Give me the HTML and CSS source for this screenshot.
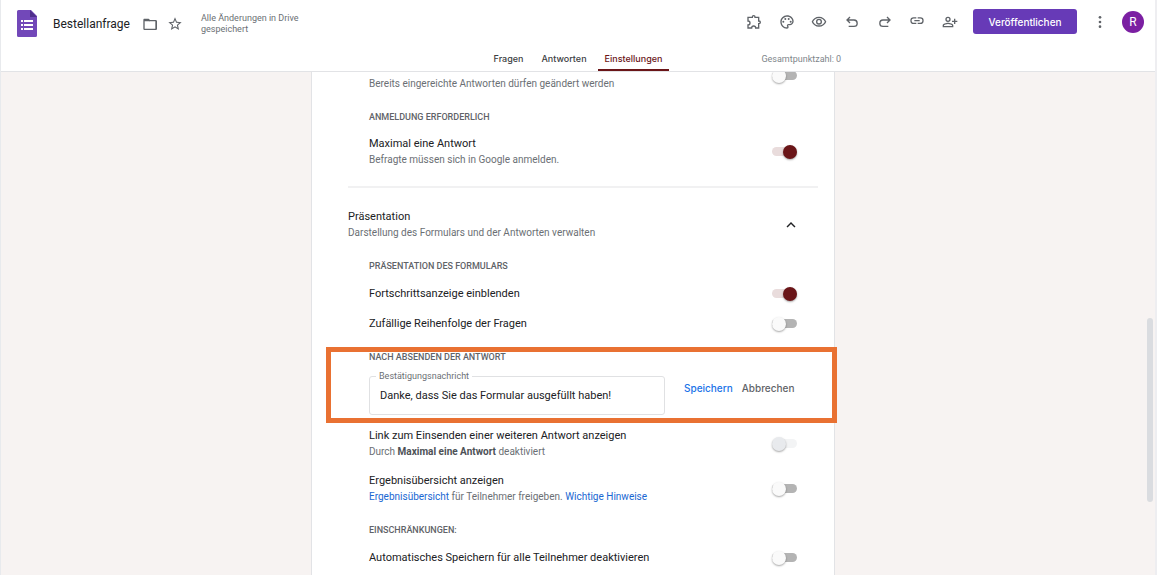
FILE: index.html
```html
<!DOCTYPE html>
<html lang="de">
  <head>
    <meta charset="utf-8">
    <title>Bestellanfrage</title>
    <link rel="stylesheet" href="styles.css">
  </head>
  <body>
    <header class="header">
      <div class="topbar">
        <div class="doc">
          <svg class="logo" viewBox="0 0 20 27">
            <path fill="#7248b9" d="M1.500 0H14l6 6v19.500a1.500 1.500 0 0 1-1.500 1.500h-17A1.500 1.500 0 0 1 0 25.500v-24A1.500 1.500 0 0 1 1.500 0z"/>
            <path fill="#4f2f8c" d="M13 0l7 7h-7z"/>
            <path fill="#fff" d="M7 10h9v2H7zM7 14h9v2H7zM7 18h9v2H7zM4 10h2v2H4zM4 14h2v2H4zM4 18h2v2H4z"/>
          </svg>
          <h1 class="doc-title">Bestellanfrage</h1>
          <button class="icon-btn" aria-label="Verschieben">
            <svg viewBox="0 0 24 24"><path d="M9.170 6l2 2H20v11H4V6h5.170M10 4H3.500C2.400 4 2 4.900 2 6v13c0 1.100.9 2 2 2h16.500c1.100 0 2-.9 2-2V8c0-1.100-.9-2-2-2H12l-2-2z"/><path d="M3 5h7l2 3H3z"/></svg>
          </button>
          <button class="icon-btn star" aria-label="Markieren">
            <svg viewBox="0 0 24 24"><path d="M22 9.240l-7.190-.62L12 2 9.190 8.630 2 9.240l5.460 4.730L5.820 21 12 17.270 18.180 21l-1.630-7.030L22 9.240zM12 15.400l-3.760 2.270 1-4.280-3.320-2.880 4.380-.38L12 6.100l1.710 4.040 4.380.38-3.320 2.880 1 4.280L12 15.400z"/></svg>
          </button>
          <p class="save-state">Alle Änderungen in Drive gespeichert</p>
        </div>
        <div class="tools">
          <button class="icon-btn" aria-label="Add-ons">
            <svg viewBox="0 0 24 24"><path fill="none" stroke="#5f6368" stroke-width="2" d="M3 5h6.500V4.500a2 2 0 0 1 4 0V5H19v5.500h.5a2 2 0 0 1 0 4H19V21h-4.500c0-4-6-4-6 0H3v-4.500c4 0 4-6 0-6z"/></svg>
          </button>
          <button class="icon-btn" aria-label="Design anpassen">
            <svg viewBox="0 0 24 24"><path d="M12 22C6.490 22 2 17.510 2 12S6.490 2 12 2s10 4.040 10 9c0 3.310-2.690 6-6 6h-1.770c-.28 0-.5.22-.5.5 0 .12.050.23.130.33.410.47.640 1.060.640 1.670A2.500 2.500 0 0 1 12 22zm0-18c-4.410 0-8 3.590-8 8s3.590 8 8 8c.28 0 .5-.22.5-.5a.54.54 0 0 0-.14-.35c-.41-.46-.63-1.050-.63-1.650a2.500 2.500 0 0 1 2.500-2.500H16c2.210 0 4-1.790 4-4 0-3.860-3.590-7-8-7z"/><circle cx="6.500" cy="11.500" r="1.500"/><circle cx="9.500" cy="7.500" r="1.500"/><circle cx="14.500" cy="7.500" r="1.500"/><circle cx="17.500" cy="11.500" r="1.500"/></svg>
          </button>
          <button class="icon-btn" aria-label="Vorschau">
            <svg viewBox="0 0 24 24"><path d="M12 6c3.790 0 7.170 2.130 8.820 5.500C19.170 14.870 15.790 17 12 17s-7.170-2.130-8.820-5.500C4.830 8.130 8.210 6 12 6m0-2C7 4 2.730 7.110 1 11.500 2.730 15.890 7 19 12 19s9.270-3.110 11-7.500C21.270 7.110 17 4 12 4zm0 5a2.500 2.500 0 0 1 0 5 2.500 2.500 0 0 1 0-5m0-2a4.500 4.500 0 1 0 0 9 4.500 4.500 0 0 0 0-9z"/></svg>
          </button>
          <button class="icon-btn" aria-label="Rückgängig machen">
            <svg viewBox="0 0 24 24"><path fill="none" stroke="#5f6368" stroke-width="2" d="M9 4.500L4.500 9 9 13.500M5 9h10a4.500 4.500 0 0 1 0 9.500H7"/></svg>
          </button>
          <button class="icon-btn" aria-label="Wiederholen">
            <svg viewBox="0 0 24 24"><path fill="none" stroke="#5f6368" stroke-width="2" d="M15 4.500L19.500 9 15 13.500M19 9H9a4.500 4.500 0 0 0 0 9.500h8"/></svg>
          </button>
          <button class="icon-btn" aria-label="Link kopieren">
            <svg viewBox="0 0 24 24"><path d="M3.900 10c0-1.710 1.390-3.100 3.100-3.100h4V5H7a5 5 0 0 0 0 10h4v-1.900H7c-1.710 0-3.100-1.390-3.100-3.100zM8 11h8V9H8v2zm9-6h-4v1.900h4a3.100 3.100 0 0 1 0 6.200h-4V15h4a5 5 0 0 0 0-10z"/></svg>
          </button>
          <button class="icon-btn" aria-label="Mitbearbeiter hinzufügen">
            <svg viewBox="0 0 24 24"><path d="M9 12a4 4 0 1 0 0-8 4 4 0 0 0 0 8zm0-6a2 2 0 1 1 0 4 2 2 0 0 1 0-4zm0 7c-2.670 0-8 1.340-8 4v3h16v-3c0-2.660-5.330-4-8-4zm6 5H3v-.99C3.200 16.290 6.300 15 9 15s5.800 1.290 6 2v1zM20 10V7h-2v3h-3v2h3v3h2v-3h3v-2z"/></svg>
          </button>
        </div>
        <button class="publish">Veröffentlichen</button>
        <button class="icon-btn more" aria-label="Mehr">
          <svg viewBox="0 0 24 24"><circle cx="12" cy="5" r="2"/><circle cx="12" cy="12" r="2"/><circle cx="12" cy="19" r="2"/></svg>
        </button>
        <button class="avatar">R</button>
      </div>
      <div class="tabbar">
        <nav class="tabs">
          <a class="tab" href="#">Fragen</a>
          <a class="tab" href="#">Antworten</a>
          <a class="tab active" href="#">Einstellungen</a>
        </nav>
        <span class="points">Gesamtpunktzahl: 0</span>
      </div>
    </header>

    <main class="main">
      <section class="card">
        <div class="group">
          <div class="row scrolled">
            <label class="desc" for="edit">Bereits eingereichte Antworten dürfen geändert werden</label>
            <input class="toggle" id="edit" type="checkbox">
          </div>
          <h3 class="heading">ANMELDUNG ERFORDERLICH</h3>
          <div class="row">
            <div>
              <label class="name" for="limit">Maximal eine Antwort</label>
              <p class="desc">Befragte müssen sich in Google anmelden.</p>
            </div>
            <input class="toggle" id="limit" type="checkbox" checked>
          </div>
        </div>

        <hr class="divider">

        <div class="row section-head">
          <div>
            <h2 class="name">Präsentation</h2>
            <p class="desc">Darstellung des Formulars und der Antworten verwalten</p>
          </div>
          <button class="collapse" aria-label="Minimieren">
            <svg viewBox="0 0 24 24"><path d="M12 8l-6 6 1.410 1.410L12 10.830l4.590 4.580L18 14z"/></svg>
          </button>
        </div>

        <div class="group">
          <h3 class="heading">PRÄSENTATION DES FORMULARS</h3>
          <div class="row">
            <label class="name" for="progress">Fortschrittsanzeige einblenden</label>
            <input class="toggle" id="progress" type="checkbox" checked>
          </div>
          <div class="row">
            <label class="name" for="shuffle">Zufällige Reihenfolge der Fragen</label>
            <input class="toggle" id="shuffle" type="checkbox">
          </div>

          <div class="confirmation">
            <h3 class="heading">NACH ABSENDEN DER ANTWORT</h3>
            <form class="message">
              <div class="field">
                <label class="field-label" for="message">Bestätigungsnachricht</label>
                <input class="field-input" id="message" type="text" value="Danke, dass Sie das Formular ausgefüllt haben!">
              </div>
              <button class="text-btn primary" type="submit">Speichern</button>
              <button class="text-btn" type="reset">Abbrechen</button>
            </form>
            <div class="marker"></div>
          </div>

          <div class="row">
            <div>
              <label class="name" for="again">Link zum Einsenden einer weiteren Antwort anzeigen</label>
              <p class="desc">Durch <b>Maximal eine Antwort</b> deaktiviert</p>
            </div>
            <input class="toggle" id="again" type="checkbox" disabled>
          </div>
          <div class="row">
            <div>
              <label class="name" for="summary">Ergebnisübersicht anzeigen</label>
              <p class="desc"><a href="#">Ergebnisübersicht</a> für Teilnehmer freigeben. <a href="#">Wichtige Hinweise</a></p>
            </div>
            <input class="toggle" id="summary" type="checkbox">
          </div>
          <h3 class="heading">EINSCHRÄNKUNGEN:</h3>
          <div class="row">
            <label class="name" for="autosave">Automatisches Speichern für alle Teilnehmer deaktivieren</label>
            <input class="toggle" id="autosave" type="checkbox">
          </div>
        </div>
      </section>
      <div class="scrollbar"></div>
    </main>
  </body>
</html>
```
FILE: styles.css
```css
* { box-sizing: border-box; }

body {
  display: flex;
  flex-direction: column;
  height: 100vh;
  margin: 0;
  overflow: hidden;
  border-left: 1px solid #e8eaed;
  border-right: 2px solid #eeeef1;
  background-color: #f7f3f2;
  color: #202124;
  font-family: Roboto, sans-serif;
  font-size: 12px;
  line-height: 16px;
}

h1, h2, h3, p { margin: 0; font-weight: 400; }
button { padding: 0; border: 0; background: none; font-family: inherit; cursor: pointer; }
a { color: #1967d2; text-decoration: none; }

/* header */
.header {
  flex: none;
  background-color: #fff;
  border-bottom: 1px solid #e2e3e6;
}
.topbar {
  display: flex;
  align-items: center;
  justify-content: space-between;
  height: 43px;
  padding: 0 11px 0 16px;
}
.doc { display: flex; align-items: center; padding-top: 4px; }
.logo { width: 20px; height: 27px; margin-right: 16px; }
.doc-title { margin-right: 12px; font-size: 12px; }

.icon-btn { flex: none; width: 16px; height: 16px; }
.icon-btn svg { display: block; width: 16px; height: 16px; fill: #5f6368; }
.star { margin-left: 9px; }

.save-state {
  width: 100px;
  margin-left: 18px;
  color: #6b6f74;
  font-size: 9px;
  line-height: 11px;
}
.tools {
  display: flex;
  justify-content: space-between;
  width: 212px;
  margin-left: auto;
}
.publish {
  width: 104px;
  height: 25px;
  margin: 0 15px;
  border-radius: 3px;
  background-color: #673ab7;
  color: #fff;
  font-family: Inter, sans-serif;
  font-size: 10px;
  font-weight: 500;
}
.avatar {
  width: 22px;
  height: 22px;
  margin-left: 14px;
  border-radius: 50%;
  background-color: #7b1fa2;
  color: #fff;
  font-size: 12px;
}

.tabbar {
  display: grid;
  grid-template-columns: 1fr auto 1fr;
  height: 28px;
}
.tabs { display: flex; grid-column: 2; gap: 4px; }
.tab {
  padding: 8px 7px 0;
  color: #3c4043;
  font-family: Inter, sans-serif;
  font-size: 9px;
  font-weight: 500;
}
.tab.active { border-bottom: 2px solid #6a1518; color: #6a1518; }
.points {
  margin-left: 92px;
  padding-top: 8px;
  color: #80868b;
  font-size: 9px;
}

/* settings */
.main {
  display: flex;
  flex: 1;
  justify-content: center;
  min-height: 0;
  overflow: hidden;
  position: relative;
  padding-right: 10px;
}
.card {
  flex: none;
  width: 524px;
  height: max-content;
  min-height: 110%;
  margin-top: -12px;
  padding: 0 16px 0 36px;
  border: 1px solid #e2e3e6;
  border-top: 0;
  background-color: #fff;
}
.group { padding: 0 21px; }

.row {
  display: flex;
  align-items: center;
  justify-content: space-between;
  min-height: 17px;
}
.row + .row, .confirmation + .row { margin-top: 13px; }
.scrolled { height: 32px; }
.scrolled .desc { margin-top: 16px; }

.name { display: block; color: #202124; font-size: 11px; }
.desc { display: block; color: #6b6f74; font-size: 10px; }
.desc b { color: #4d5156; font-weight: 700; }
.heading {
  margin: 17px 0 11px;
  color: #5f6368;
  font-size: 9px;
  font-weight: 500;
}
.divider {
  height: 2px;
  margin: 18px 0 21px;
  border: 0;
  background-color: #f1f1f2;
}
.section-head { padding-right: 18px; }
.collapse { width: 18px; height: 18px; }
.collapse svg { display: block; width: 18px; height: 18px; fill: #202124; }

/* switches */
.toggle {
  appearance: none;
  display: flex;
  align-items: center;
  position: relative;
  z-index: 0;
  width: 25px;
  height: 14px;
  margin: 0;
}
.toggle::before {
  content: '';
  width: 14px;
  height: 14px;
  border-radius: 50%;
  background-color: #fafafa;
  box-shadow: 0 1px 2px rgba(0, 0, 0, 0.35);
}
.toggle::after {
  content: '';
  position: absolute;
  z-index: -1;
  left: 0;
  top: 2px;
  width: 25px;
  height: 9px;
  border-radius: 5px;
  background-color: #b4b4b4;
}
.toggle:checked { justify-content: flex-end; }
.toggle:checked::before { background-color: #6a1518; }
.toggle:checked::after { background-color: #e9dcdc; }
.toggle:disabled::before { background-color: #e8eaed; }
.toggle:disabled::after { background-color: #f3f4f5; }

/* confirmation message */
.confirmation { position: relative; }
.message { display: flex; align-items: flex-start; }
.field { flex: none; position: relative; width: 296px; margin-right: 19px; }
.field-label {
  position: absolute;
  left: 7px;
  top: -8px;
  padding: 0 3px;
  background-color: #fff;
  color: #6b6f74;
  font-size: 9px;
}
.field-input {
  display: block;
  width: 100%;
  height: 39px;
  padding: 0 10px;
  border: 1px solid #e0e1e3;
  border-radius: 3px;
  color: #202124;
  font-family: inherit;
  font-size: 11px;
}
.text-btn {
  height: 24px;
  color: #5f6368;
  font-family: Inter, sans-serif;
  font-size: 10px;
  font-weight: 500;
}
.text-btn.primary { margin-right: 9px; color: #1a73e8; }

.marker {
  position: absolute;
  inset: -2px -40px -8px -43px;
  border: 5px solid #e97132;
  pointer-events: none;
}

.scrollbar {
  position: absolute;
  right: 2px;
  top: 49%;
  bottom: 73px;
  width: 6px;
  border-radius: 3px;
  background-color: #dadce0;
}
```
